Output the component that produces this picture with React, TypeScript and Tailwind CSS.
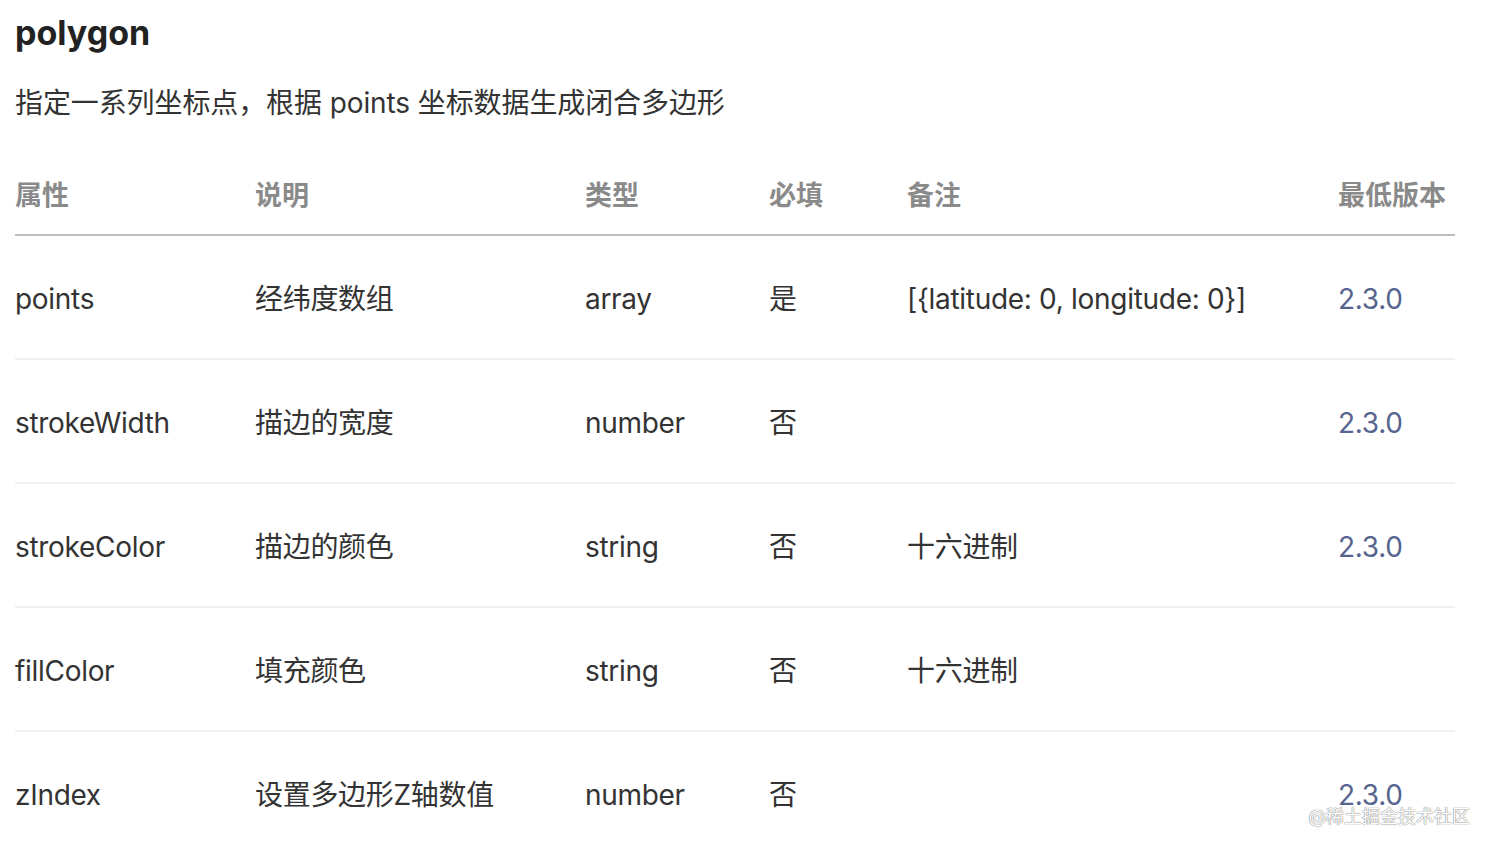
import React from "react";

type Row = {
  name: string;
  desc: string;
  type: string;
  required: string;
  note: string;
  version: string;
};

const rows: Row[] = [
  { name: "points", desc: "经纬度数组", type: "array", required: "是", note: "[{latitude: 0, longitude: 0}]", version: "2.3.0" },
  { name: "strokeWidth", desc: "描边的宽度", type: "number", required: "否", note: "", version: "2.3.0" },
  { name: "strokeColor", desc: "描边的颜色", type: "string", required: "否", note: "十六进制", version: "2.3.0" },
  { name: "fillColor", desc: "填充颜色", type: "string", required: "否", note: "十六进制", version: "" },
  { name: "zIndex", desc: "设置多边形Z轴数值", type: "number", required: "否", note: "", version: "2.3.0" },
];

const headers = ["属性", "说明", "类型", "必填", "备注", "最低版本"];

// column widths measured from the doc table
const gridCols = "grid grid-cols-[240px_330px_184px_138px_431px_112px]";

export default function App() {
  return (
    <div className="relative h-[850px] w-[1494px] overflow-hidden bg-white pl-[15px] font-['Inter','Noto_Sans_CJK_SC',sans-serif] text-[#333]">
      <h2 className="mt-[13px] text-[34px] font-bold leading-[40px] text-[#222]">polygon</h2>
      <p className="mt-[30px] text-[28px] leading-[40px] tracking-[-0.1px] text-[#333]">
        指定一系列坐标点，根据 points 坐标数据生成闭合多边形
      </p>

      <div className="mt-[31px] w-[1440px]">
        <div className={`${gridCols} h-[82px] items-center border-b-2 border-[#bdbdbd] pt-[4px]`}>
          {headers.map((h) => (
            <span key={h} className="text-[27px] font-semibold text-[#8a8a8a]">
              {h}
            </span>
          ))}
        </div>

        {rows.map((r) => (
          <div
            key={r.name}
            className={`${gridCols} h-[124px] items-center border-b-2 border-[#f0f0f0] pt-[3px] text-[28px] tracking-[-0.3px]`}
          >
            <span>{r.name}</span>
            <span>{r.desc}</span>
            <span>{r.type}</span>
            <span>{r.required}</span>
            <span>{r.note}</span>
            <span className="text-[#56648f]">{r.version}</span>
          </div>
        ))}
      </div>

      {/* watermark */}
      <div className="absolute right-[24px] bottom-[24px] text-[18px] leading-none text-white [text-shadow:0_0_1px_#777,0_0_1px_#777]">
        @稀土掘金技术社区
      </div>
    </div>
  );
}
